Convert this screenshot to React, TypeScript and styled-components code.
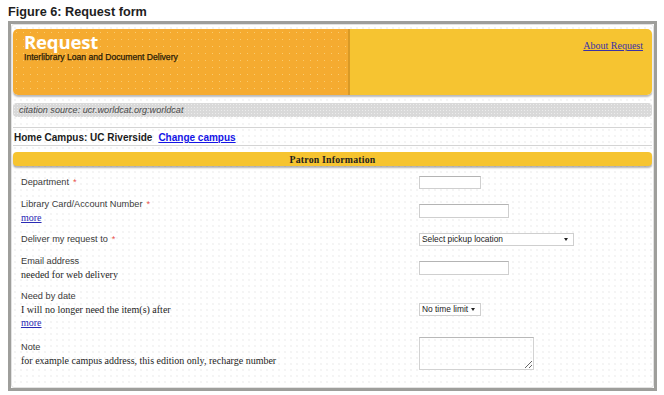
import React from "react";
import styled, { createGlobalStyle } from "styled-components";

const GlobalStyle = createGlobalStyle`
  html, body { margin: 0; padding: 0; background: #ffffff; }
  body { font-family: "Liberation Sans", Arial, sans-serif; color: #222; }
  * { box-sizing: border-box; }
`;

const Page = styled.div`
  width: 664px;
  height: 395px;
  padding: 5px 0 0 8px;
  overflow: hidden;
`;

const Title = styled.div`
  font-family: "Liberation Sans", Arial, sans-serif;
  font-weight: bold;
  font-size: 12.7px;
  line-height: 15px;
  color: #1e1e1e;
`;

const Frame = styled.div`
  margin-top: 1px;
  width: 649px;
  height: 370px;
  border: 3px solid #9e9e9b;
  background: #fff;
  padding: 0;
`;

const Inner = styled.div`
  height: 100%;
  border: 1px solid #e2e2e2;
  border-radius: 3px;
  padding: 4px 1px 0 1px;
  background-color: #fff;
  background-image: radial-gradient(circle, #e8e8e8 0.55px, transparent 0.85px);
  background-size: 6px 6px;
`;

const Banner = styled.div`
  display: flex;
  height: 66px;
  border-radius: 5px;
  overflow: hidden;
  box-shadow: 0 2px 2px rgba(0, 0, 0, 0.28);
`;

const BannerLeft = styled.div`
  width: 337px;
  padding: 4px 0 0 11px;
  background-color: #f5ab30;
  background-image: radial-gradient(circle, rgba(255, 230, 160, 0.55) 0.5px, transparent 0.8px);
  background-size: 7px 7px;
  border-right: 2px solid #d99a26;
`;

const BannerRight = styled.div`
  flex: 1;
  padding: 6px 9px 0 0;
  text-align: right;
  background-color: #f6c431;
`;

const BrandTitle = styled.div`
  font-family: "Open Sans", "Liberation Sans", Arial, sans-serif;
  font-weight: bold;
  font-size: 18.6px;
  line-height: 18px;
  color: #ffffff;
  letter-spacing: -0.2px;
`;

const BrandSub = styled.div`
  margin-top: 1px;
  font-family: "Liberation Sans", Arial, sans-serif;
  font-size: 8.6px;
  line-height: 10px;
  color: #2a1c08;
  -webkit-text-stroke: 0.25px #2a1c08;
`;

const AboutLink = styled.a`
  font-family: "Liberation Serif", "Times New Roman", serif;
  font-size: 10px;
  line-height: 12px;
  color: #3a32a8;
  text-decoration: underline;
`;

const CitationBar = styled.div`
  margin-top: 8px;
  height: 14px;
  border-radius: 4px;
  padding: 0 6px;
  background-color: #d9d9d9;
  background-image: radial-gradient(circle, #ececec 0.5px, transparent 0.7px);
  background-size: 3px 3px;
  font-style: italic;
  font-size: 9.1px;
  line-height: 14px;
  color: #4a4a4a;
`;

const CampusRow = styled.div`
  margin-top: 10px;
  height: 19px;
  border-top: 1px solid #d4d4d4;
  border-bottom: 1px solid #d4d4d4;
  padding: 2px 0 0 1px;
  font-size: 10px;
  font-weight: bold;
  line-height: 15px;
  color: #1a1a1a;
  display: flex;
  gap: 6px;
`;

const ChangeLink = styled.a`
  color: #1414e6;
  text-decoration: underline;
`;

const SectionBar = styled.div`
  margin-top: 6px;
  height: 14px;
  border-radius: 4px;
  background: #f6c430;
  box-shadow: 0 2px 2px rgba(0, 0, 0, 0.3);
  text-align: center;
  font-family: "Liberation Serif", "Times New Roman", serif;
  font-weight: bold;
  font-size: 9.8px;
  line-height: 15px;
  color: #1e1e1e;
  letter-spacing: 0.2px;
`;

const FormList = styled.div`
  margin-top: 6px;
  display: flex;
  flex-direction: column;
`;

const FormRow = styled.div`
  display: grid;
  grid-template-columns: 398px 1fr;
  align-items: center;
  padding: 4.4px 0 4.4px 8px;
`;

const LabelCell = styled.div`
  display: flex;
  flex-direction: column;
  line-height: 13px;
`;

const FieldLabel = styled.span`
  font-family: "Liberation Sans", Arial, sans-serif;
  font-size: 9.2px;
  color: #3a3a3a;
`;

const Required = styled.span`
  color: #e8504a;
  margin-left: 4px;
`;

const Hint = styled.span`
  font-family: "Liberation Serif", "Times New Roman", serif;
  font-size: 10px;
  color: #1e1e1e;
`;

const MoreLink = styled.a`
  font-family: "Liberation Serif", "Times New Roman", serif;
  font-size: 10px;
  color: #2a2ab4;
  text-decoration: underline;
  align-self: flex-start;
`;

const ControlCell = styled.div`
  display: flex;
  align-items: center;
`;

const TextInput = styled.input<{ $w: number; $h: number }>`
  width: ${(p) => p.$w}px;
  height: ${(p) => p.$h}px;
  border: 1px solid #cfcfcf;
  border-top-color: #b4b4b4;
  background: #fff;
  padding: 0 2px;
  margin: 0;
  outline: none;
`;

const SelectBox = styled.div<{ $w: number }>`
  width: ${(p) => p.$w}px;
  height: 13px;
  border: 1px solid #cfcfcf;
  background: #fff;
  display: flex;
  align-items: center;
  justify-content: space-between;
  padding: 0 5px 0 2px;
  font-family: "Liberation Sans", Arial, sans-serif;
  font-size: 8.4px;
  color: #222;
  white-space: nowrap;
`;

const Arrow = styled.span`
  flex: none;
  width: 0;
  height: 0;
  border-left: 2.5px solid transparent;
  border-right: 2.5px solid transparent;
  border-top: 3px solid #222;
`;

const NoteArea = styled.textarea`
  width: 115px;
  height: 33px;
  border: 1px solid #d2d2d2;
  border-top-color: #b8b8b8;
  background: transparent;
  margin: 0;
  padding: 0;
`;

type Row = {
  label: string;
  required?: boolean;
  hints?: string[];
  more?: boolean;
  control: React.ReactNode;
};

const rows: Row[] = [
  { label: "Department", required: true, control: <TextInput $w={62} $h={13} /> },
  {
    label: "Library Card/Account Number",
    required: true,
    more: true,
    control: <TextInput $w={90} $h={14} />,
  },
  {
    label: "Deliver my request to",
    required: true,
    control: (
      <SelectBox $w={155}>
        <span>Select pickup location</span>
        <Arrow />
      </SelectBox>
    ),
  },
  {
    label: "Email address",
    hints: ["needed for web delivery"],
    control: <TextInput $w={90} $h={14} />,
  },
  {
    label: "Need by date",
    hints: ["I will no longer need the item(s) after"],
    more: true,
    control: (
      <SelectBox $w={62}>
        <span>No time limit</span>
        <Arrow />
      </SelectBox>
    ),
  },
  {
    label: "Note",
    hints: ["for example campus address, this edition only, recharge number"],
    control: <NoteArea />,
  },
];

export default function App() {
  return (
    <>
      <GlobalStyle />
      <Page>
        <Title>Figure 6: Request form</Title>
        <Frame>
          <Inner>
            <Banner>
              <BannerLeft>
                <BrandTitle>Request</BrandTitle>
                <BrandSub>Interlibrary Loan and Document Delivery</BrandSub>
              </BannerLeft>
              <BannerRight>
                <AboutLink href="#">About Request</AboutLink>
              </BannerRight>
            </Banner>
            <CitationBar>citation source: ucr.worldcat.org:worldcat</CitationBar>
            <CampusRow>
              <span>Home Campus: UC Riverside</span>
              <ChangeLink href="#">Change campus</ChangeLink>
            </CampusRow>
            <SectionBar>Patron Information</SectionBar>
            <FormList>
              {rows.map((r) => (
                <FormRow key={r.label}>
                  <LabelCell>
                    <FieldLabel>
                      {r.label}
                      {r.required && <Required>*</Required>}
                    </FieldLabel>
                    {r.hints?.map((h) => (
                      <Hint key={h}>{h}</Hint>
                    ))}
                    {r.more && <MoreLink href="#">more</MoreLink>}
                  </LabelCell>
                  <ControlCell>{r.control}</ControlCell>
                </FormRow>
              ))}
            </FormList>
          </Inner>
        </Frame>
      </Page>
    </>
  );
}
